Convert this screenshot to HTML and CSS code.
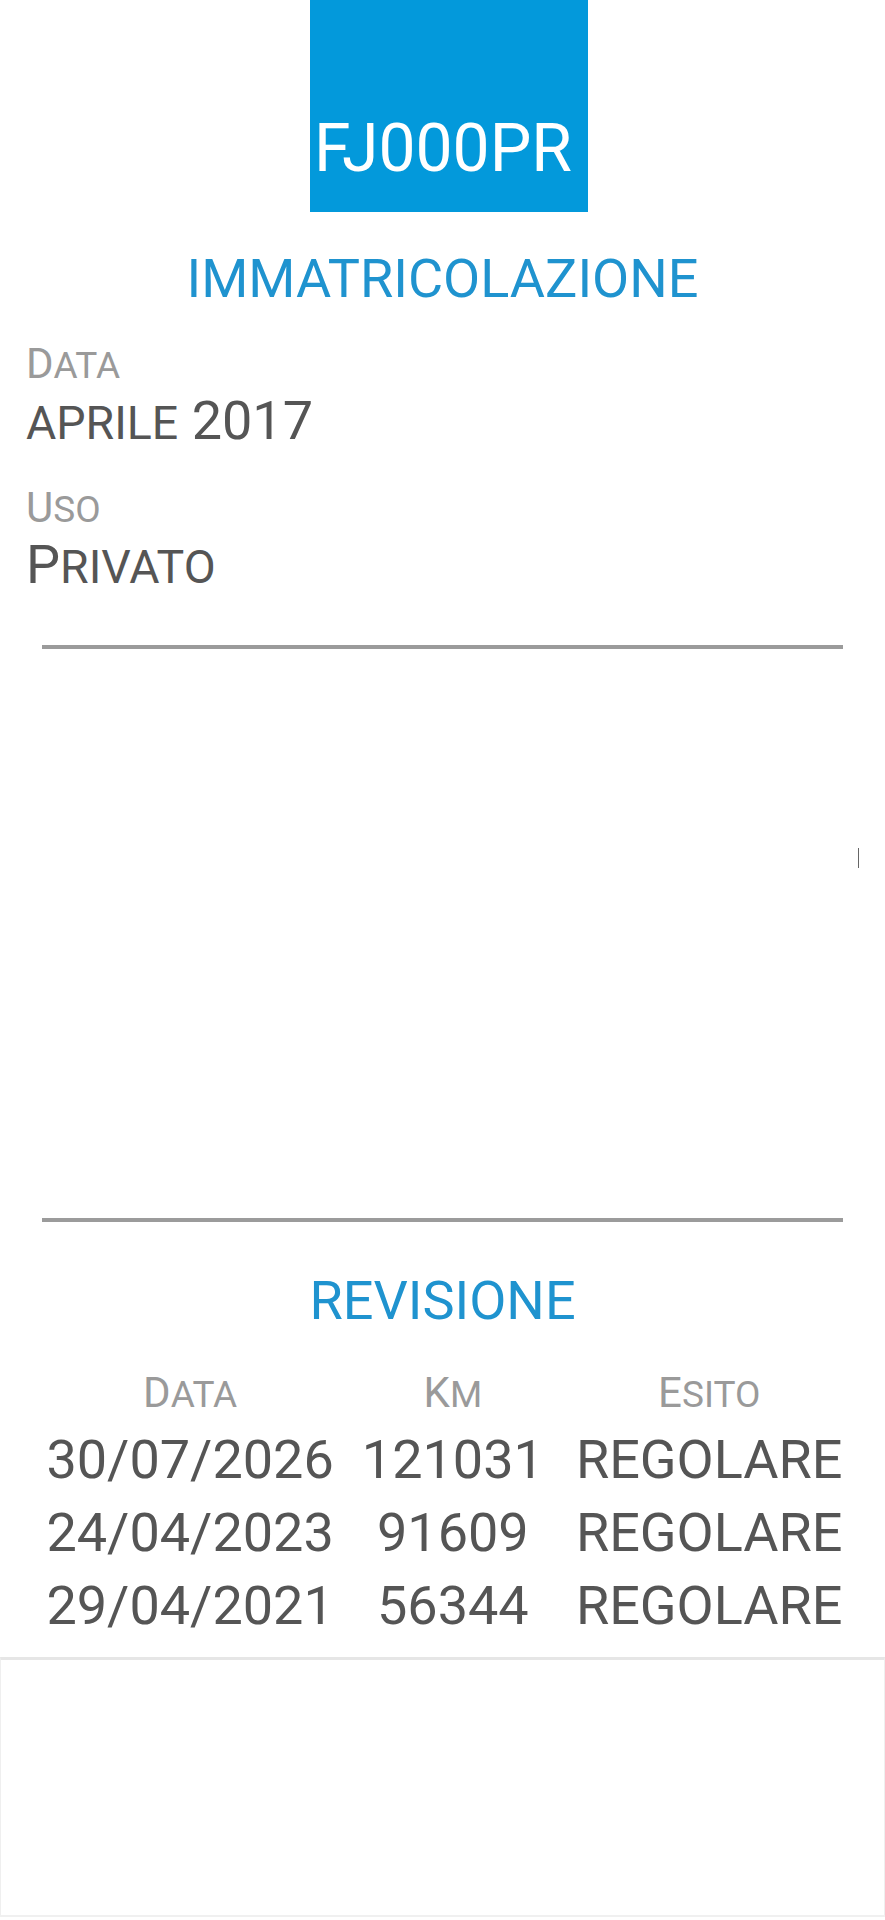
FILE: index.html
```html
<!DOCTYPE html>
<html lang="it">
<head>
<meta charset="utf-8">
<title>FJ000PR</title>
<link rel="stylesheet" href="styles.css">
</head>
<body>
<header class="plate-wrap">
  <div class="plate">FJ000PR</div>
</header>

<section class="reg">
  <h2 class="title">IMMATRICOLAZIONE</h2>
  <div class="label first"><span>D</span><span class="sc">ata</span></div>
  <div class="value"><span class="sc">aprile</span> 2017</div>
  <div class="label"><span>U</span><span class="sc">so</span></div>
  <div class="value"><span>P</span><span class="sc">rivato</span></div>
</section>

<hr class="divider">
<div class="blank"><span class="marker"></span></div>
<hr class="divider">

<section class="rev">
  <h2 class="title">REVISIONE</h2>
  <table class="rev-table">
    <thead>
      <tr>
        <th><span>D</span><span class="sc">ata</span></th>
        <th><span>K</span><span class="sc">m</span></th>
        <th><span>E</span><span class="sc">sito</span></th>
      </tr>
    </thead>
    <tbody>
      <tr><td>30/07/2026</td><td>121031</td><td>REGOLARE</td></tr>
      <tr><td>24/04/2023</td><td>91609</td><td>REGOLARE</td></tr>
      <tr><td>29/04/2021</td><td>56344</td><td>REGOLARE</td></tr>
    </tbody>
  </table>
</section>

<div class="ad-slot"></div>
</body>
</html>
```

FILE: styles.css
```css
* { box-sizing: border-box; }

html, body {
  margin: 0;
  padding: 0;
  background: #ffffff;
}

body {
  font-family: Roboto, "Liberation Sans", Arial, sans-serif;
  color: #555555;
  overflow: hidden;
}

.plate-wrap {
  display: flex;
  justify-content: center;
}

.plate {
  width: 278px;
  height: 212px;
  margin-left: 13px;
  padding-top: 116px;
  padding-left: 4px;
  background: #0399db;
  color: #ffffff;
  font-size: 66px;
  line-height: 66px;
  text-align: left;
  white-space: nowrap;
}

.title {
  margin: 0;
  font-weight: 400;
  font-size: 54px;
  line-height: 54px;
  color: #1f93cf;
  text-align: center;
}

.reg {
  padding-left: 26px;
}

.reg .title {
  margin-top: 40px;
  margin-left: -26px;
}

.label {
  font-size: 42px;
  line-height: 42px;
  color: #9a9a9a;
  margin-top: 39px;
}

.label.first {
  margin-top: 37px;
}

.value {
  font-size: 54px;
  line-height: 54px;
  color: #555555;
  margin-top: 9px;
}

.sc {
  text-transform: uppercase;
  font-size: 0.86em;
  line-height: 1;
}

.label .sc,
.rev-table th .sc {
  font-size: 0.88em;
}

.divider {
  margin: 0 42px;
  border: 0;
  height: 4px;
  background: #9b9b9b;
}

.reg + .divider {
  margin-top: 53px;
}

.blank {
  position: relative;
  height: 569px;
}

.marker {
  position: absolute;
  left: 858px;
  top: 199px;
  width: 1px;
  height: 20px;
  background: #666666;
}

.rev .title {
  margin-top: 52px;
}

.rev-table {
  margin: 44px auto 0;
  border-collapse: collapse;
}

.rev-table th,
.rev-table td {
  padding: 0 16px;
  text-align: center;
  white-space: nowrap;
  vertical-align: top;
}

.rev-table th:first-child,
.rev-table td:first-child {
  padding-left: 20px;
  padding-right: 12px;
}

.rev-table th {
  font-weight: 400;
  font-size: 42px;
  line-height: 42px;
  color: #9a9a9a;
  padding-bottom: 9px;
}

.rev-table td {
  font-size: 54px;
  line-height: 73px;
  color: #555555;
}

.ad-slot {
  margin-top: 15px;
  height: 260px;
  border-top: 3px solid #e6e6e6;
  border-left: 1px solid #efefef;
  border-right: 1px solid #efefef;
  border-bottom: 2px solid #f0f0f0;
}
```
